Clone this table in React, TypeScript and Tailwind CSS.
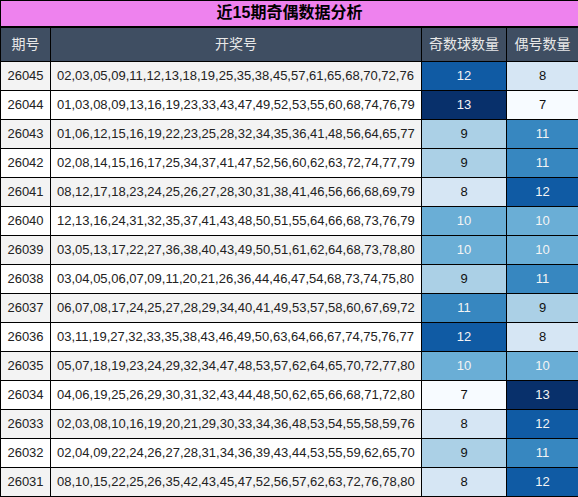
const rows: [string, string, number, number][] = [
  ["26045", "02,03,05,09,11,12,13,18,19,25,35,38,45,57,61,65,68,70,72,76", 12, 8],
  ["26044", "01,03,08,09,13,16,19,23,33,43,47,49,52,53,55,60,68,74,76,79", 13, 7],
  ["26043", "01,06,12,15,16,19,22,23,25,28,32,34,35,36,41,48,56,64,65,77", 9, 11],
  ["26042", "02,08,14,15,16,17,25,34,37,41,47,52,56,60,62,63,72,74,77,79", 9, 11],
  ["26041", "08,12,17,18,23,24,25,26,27,28,30,31,38,41,46,56,66,68,69,79", 8, 12],
  ["26040", "12,13,16,24,31,32,35,37,41,43,48,50,51,55,64,66,68,73,76,79", 10, 10],
  ["26039", "03,05,13,17,22,27,36,38,40,43,49,50,51,61,62,64,68,73,78,80", 10, 10],
  ["26038", "03,04,05,06,07,09,11,20,21,26,36,44,46,47,54,68,73,74,75,80", 9, 11],
  ["26037", "06,07,08,17,24,25,27,28,29,34,40,41,49,53,57,58,60,67,69,72", 11, 9],
  ["26036", "03,11,19,27,32,33,35,38,43,46,49,50,63,64,66,67,74,75,76,77", 12, 8],
  ["26035", "05,07,18,19,23,24,29,32,34,47,48,53,57,62,64,65,70,72,77,80", 10, 10],
  ["26034", "04,06,19,25,26,29,30,31,32,43,44,48,50,62,65,66,68,71,72,80", 7, 13],
  ["26033", "02,03,08,10,16,19,20,21,29,30,33,34,36,48,53,54,55,58,59,76", 8, 12],
  ["26032", "02,04,09,22,24,26,27,28,31,34,36,39,43,44,53,55,59,62,65,70", 9, 11],
  ["26031", "08,10,15,22,25,26,35,42,43,45,47,52,56,57,62,63,72,76,78,80", 8, 12],
];

// Blues colour scale, 7 → 13
const heat: Record<number, string> = {
  7: "bg-[#f7fbff] text-[#111]",
  8: "bg-[#d6e6f4] text-[#111]",
  9: "bg-[#abd0e6] text-[#111]",
  10: "bg-[#6aaed6] text-[#f4f4f4]",
  11: "bg-[#3787c0] text-[#f4f4f4]",
  12: "bg-[#105ba4] text-[#f4f4f4]",
  13: "bg-[#08306b] text-[#f4f4f4]",
};

const cell = "border border-black h-[29px] p-0 text-[13px]";

export default function App() {
  return (
    <div className="w-[578px] bg-white font-['Liberation_Sans','Noto_Sans_CJK_SC',sans-serif] text-[#222]">
      <table className="w-[578px] table-fixed border-collapse">
        <colgroup>
          <col className="w-[50px]" />
          <col className="w-[371px]" />
          <col className="w-[85px]" />
          <col className="w-[72px]" />
        </colgroup>
        <thead>
          <tr>
            <th
              colSpan={4}
              className="h-[26px] border border-b-2 border-black bg-[#ee82ee] p-0 text-center text-[16px] font-bold leading-none text-black"
            >
              近15期奇偶数据分析
            </th>
          </tr>
          <tr className="bg-[#3f4e62] text-[14px] font-normal text-[#e8e8e8]">
            <th className="h-[35px] border border-black p-0 font-normal">期号</th>
            <th className="border border-black p-0 font-normal">开奖号</th>
            <th className="border border-black p-0 font-normal">奇数球数量</th>
            <th className="border border-black p-0 font-normal">偶号数量</th>
          </tr>
        </thead>
        <tbody>
          {rows.map(([no, nums, odd, even], i) => (
            <tr key={no} className={i % 2 === 0 ? "bg-[#f3f3f3]" : "bg-white"}>
              <td className={`${cell} text-center`}>{no}</td>
              <td className={`${cell} pl-[6px] whitespace-nowrap`}>{nums}</td>
              <td className={`${cell} text-center ${heat[odd]}`}>{odd}</td>
              <td className={`${cell} text-center ${heat[even]}`}>{even}</td>
            </tr>
          ))}
        </tbody>
      </table>
    </div>
  );
}
